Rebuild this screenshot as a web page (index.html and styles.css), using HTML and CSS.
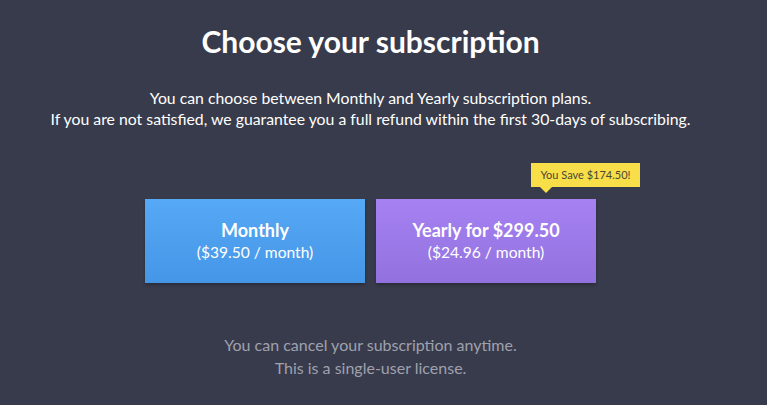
FILE: index.html
```html
<!DOCTYPE html>
<html lang="en">
<head>
  <meta charset="UTF-8">
  <meta name="viewport" content="width=device-width, initial-scale=1.0">
  <title>Choose your subscription</title>
  <link rel="stylesheet" href="styles.css">
</head>
<body>

<div class="page">
  <h1>Choose your subscription</h1>
  <p class="lead">You can choose between Monthly and Yearly subscription plans.<br>
    If you are not satisfied, we guarantee you a full refund within the first 30-days of subscribing.</p>

  <div class="plans">
    <a href="#" class="plan monthly">
      <span class="name">Monthly</span>
      <span class="price">($39.50 / month)</span>
    </a>
    <a href="#" class="plan yearly">
      <span class="save">You Save $174.50!</span>
      <span class="name">Yearly for $299.50</span>
      <span class="price">($24.96 / month)</span>
    </a>
  </div>

  <p class="note">You can cancel your subscription anytime.<br>
    This is a single-user license.</p>
</div>

</body>
</html>
```

FILE: styles.css
```css
body {
  margin: 0;
  padding: 0;
  background-color: #383b4b;
  font-family: Lato, "Open Sans", sans-serif;
  color: #fff;
}
.page {
  width: 741px;
  padding-top: 23px;
  text-align: center;
}
h1 {
  margin: 0;
  font-size: 30px;
  line-height: 36px;
  font-weight: 700;
}
.lead {
  margin: 28px 0 0;
  font-size: 15.8px;
  line-height: 21px;
}
.plans {
  display: flex;
  justify-content: center;
  gap: 11px;
  margin-top: 70px;
}
.plan {
  position: relative;
  width: 220px;
  height: 84px;
  display: flex;
  flex-direction: column;
  justify-content: center;
  color: #fff;
  text-decoration: none;
  box-shadow: 0 2px 3px rgba(0, 0, 0, 0.25);
}
.monthly {
  background: linear-gradient(#56a9f6, #4596e7);
}
.yearly {
  background: linear-gradient(#a681f2, #9272de);
}
.name {
  font-size: 18px;
  font-weight: 700;
  line-height: 21px;
}
.price {
  font-size: 15.6px;
  line-height: 22px;
}
.save {
  position: absolute;
  left: 155px;
  top: -36px;
  width: 109px;
  height: 24px;
  line-height: 24px;
  background-color: #f8df4a;
  color: #4a4632;
  font-size: 11px;
}
.save::after {
  content: "";
  position: absolute;
  left: 9px;
  bottom: -6px;
  border-left: 6px solid transparent;
  border-right: 6px solid transparent;
  border-top: 6px solid #f8df4a;
}
.note {
  margin: 50px 0 0;
  font-size: 16px;
  line-height: 23px;
  color: #9fa1ae;
}
```
